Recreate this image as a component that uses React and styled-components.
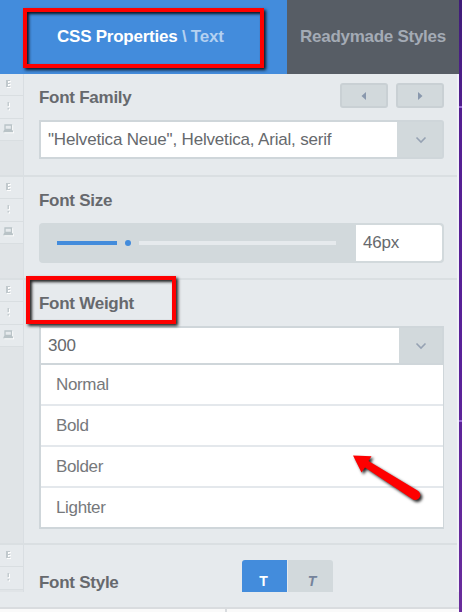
import { useState } from "react";
import styled, { createGlobalStyle } from "styled-components";

const GlobalStyle = createGlobalStyle`
  * {
    box-sizing: border-box;
  }
  body {
    margin: 0;
    overflow: hidden;
    font-family: "Liberation Sans", Arial, sans-serif;
  }
`;

const Page = styled.div`
  position: relative;
  width: 462px;
  height: 612px;
  display: flex;
  overflow: hidden;
  background: linear-gradient(#3f1c78, #551f92 20%, #5a2199 60%, #6a2c9c);
`;

const Panel = styled.div`
  width: 459px;
  display: flex;
  flex-direction: column;
  background-color: #e6eaed;
`;

const Backdrop = styled.div`
  width: 3px;
  display: flex;
  flex-direction: column;
  padding-top: 106px;
  gap: 312px;
`;

const Speck = styled.div`
  height: 2px;
  background-color: #9a6ad6;
`;

const Tabs = styled.div`
  display: flex;
  height: 74px;
  flex-shrink: 0;
`;

const Tab = styled.div`
  width: ${(props) => (props.$active ? "287px" : "172px")};
  padding: 27px 0 0 ${(props) => (props.$active ? "57px" : "13px")};
  background-color: ${(props) => (props.$active ? "#438cdc" : "#575d65")};
  color: ${(props) => (props.$active ? "#fff" : "#a4abb5")};
  font-size: 17px;
  line-height: 20px;
  font-weight: bold;
  white-space: nowrap;
  letter-spacing: ${(props) => (props.$active ? "-0.24px" : "-0.27px")};
  span {
    color: #b4d1f1;
  }
`;

const Body = styled.div`
  height: 518px;
  flex-shrink: 0;
  overflow: hidden;
  border-right: 2px solid #f0f1f7;
`;

const Section = styled.section`
  display: flex;
  height: ${(props) => props.$height}px;
  border-bottom: 2px solid #dadfe2;
`;

const Rail = styled.div`
  width: 24px;
  flex-shrink: 0;
  background-color: #e0e4e7;
  border-right: 1px solid #d9dee2;
`;

const RailCell = styled.div`
  height: ${(props) => props.$height}px;
  display: flex;
  justify-content: center;
  padding: 5px 6px 0 0;
  background-color: #e6eaed;
  border-bottom: 1px solid #d9dee1;
  svg {
    filter: drop-shadow(1px 1px 0 #fff);
  }
`;

const Content = styled.div`
  flex: 1;
  padding: 14px 13px 0 15px;
`;

const TitleRow = styled.div`
  display: flex;
  justify-content: space-between;
  height: 32px;
`;

const Title = styled.div`
  color: #66696d;
  font-size: 17px;
  line-height: 20px;
  font-weight: bold;
  letter-spacing: -0.26px;
`;

const Pager = styled.div`
  display: flex;
  gap: 8px;
  margin-top: -5px;
`;

const PagerButton = styled.button`
  width: 48px;
  height: 25px;
  padding: 0;
  display: flex;
  align-items: center;
  justify-content: center;
  background-color: #d2d9dc;
  border: 2px solid #c9d0d4;
  border-radius: 3px;
`;

const SelectBox = styled.div`
  display: flex;
  width: 405px;
  height: 39px;
  border: 2px solid #cfd6da;
  border-radius: ${(props) => (props.$open ? "0" : "0 3px 3px 0")};
  background-color: #fff;
`;

const Value = styled.div`
  flex: 1;
  padding-left: 7px;
  color: #66696d;
  font-size: 17px;
  line-height: 36px;
  letter-spacing: -0.18px;
  white-space: nowrap;
`;

const Toggle = styled.button`
  width: ${(props) => props.$width}px;
  border: 0;
  padding: 0 15px 0 0;
  display: flex;
  align-items: center;
  justify-content: flex-end;
  background-color: #d2d9dc;
`;

const Options = styled.div`
  width: 405px;
  border: solid #cfd6da;
  border-width: 0 1px 2px 2px;
  background-color: #fff;
`;

const Option = styled.div`
  height: 41px;
  padding-left: 15px;
  border-bottom: 2px solid #e4e8ec;
  color: #76787b;
  font-size: 17px;
  line-height: 39px;
  letter-spacing: -0.35px;
  &:last-child {
    height: 39px;
    border-bottom: 0;
  }
`;

const SliderBox = styled.div`
  display: flex;
  align-items: center;
  width: 405px;
  height: 40px;
  padding: 2px 2px 2px 18px;
  background-color: #d2d9dc;
  border-radius: 4px;
`;

const Bar = styled.div`
  width: ${(props) => (props.$filled ? 60 : 197)}px;
  height: 4px;
  background-color: ${(props) => (props.$filled ? "#438cdc" : "#e6eaed")};
`;

const Knob = styled.div`
  width: 6px;
  height: 6px;
  margin: 0 8px;
  border-radius: 50%;
  background-color: #438cdc;
`;

const SizeValue = styled(Value)`
  height: 36px;
  margin-left: 20px;
  background-color: #fff;
  border-radius: 0 3px 3px 0;
`;

const StyleRow = styled.div`
  display: flex;
  justify-content: space-between;
  padding-top: 1px;
`;

const StyleTitle = styled(Title)`
  padding-top: 13px;
`;

const StyleButtons = styled.div`
  display: flex;
  gap: 1px;
  margin-right: 111px;
`;

const StyleButton = styled.button`
  width: 45px;
  height: 36px;
  border: 0;
  padding: ${(props) => (props.$right ? "13px 0 0 3px" : "13px 2px 0 0")};
  display: flex;
  justify-content: center;
  font-family: inherit;
  font-size: 14px;
  line-height: 17px;
  font-weight: bold;
  font-style: ${(props) => (props.$right ? "italic" : "normal")};
  color: ${(props) => (props.$active ? "#fff" : "#75839b")};
  background-color: ${(props) => (props.$active ? "#438cdc" : "#d2d9dc")};
  border-radius: ${(props) => (props.$right ? "0 3px 0 0" : "3px 0 0 0")};
`;

const Footer = styled.div`
  display: flex;
  height: 5px;
  margin-top: 15px;
  border-top: 2px solid #d9dcdf;
  background-color: #fafafa;
`;

const FooterCell = styled.div`
  width: 227px;
  border-right: 2px solid #d9dcdf;
`;

const Highlight = styled.div`
  position: absolute;
  left: ${(props) => props.$x}px;
  top: ${(props) => props.$y}px;
  width: ${(props) => props.$w}px;
  height: ${(props) => props.$h}px;
  border: 4px solid #fe0000;
  box-shadow: 2px 2px 3px rgba(0, 0, 0, 0.85),
    inset 2px 2px 3px rgba(0, 0, 0, 0.85);
`;

const Pointer = styled.svg`
  position: absolute;
  left: 345px;
  top: 448px;
  filter: drop-shadow(2px 2px 1.5px rgba(0, 0, 0, 0.85));
`;

function LetterIcon() {
  return (
    <svg width="7" height="9" viewBox="0 0 7 9" fill="#c1c9cd">
      <path d="M1 1h2v7H1zM3 1h2v1H3zM3 4h2v1H3zM3 7h2v1H3z" />
    </svg>
  );
}

function BangIcon() {
  return (
    <svg width="7" height="10" viewBox="0 0 7 10" fill="#c3cbcf">
      <path d="M2.500 1h1.500v4H2.500zM2.500 7h1.500v1.500H2.500z" />
    </svg>
  );
}

function LaptopIcon() {
  return (
    <svg width="11" height="9" viewBox="0 0 11 9">
      <path d="M2 1h6.500v4.500H2z" fill="#e6eaed" stroke="#b9c3c7" strokeWidth="1.3" />
      <path d="M1 6h8.500l.8 2.200H.2z" fill="#b9c3c7" />
    </svg>
  );
}

function Chevron() {
  return (
    <svg width="12" height="8" viewBox="0 0 12 8" fill="none">
      <path d="M1.500 1.500L6 6l4.500-4.500" stroke="#96a2b3" strokeWidth="1.6" />
    </svg>
  );
}

function RailCells({ short }) {
  return (
    <Rail>
      <RailCell $height={22}>
        <LetterIcon />
      </RailCell>
      <RailCell $height={23}>
        <BangIcon />
      </RailCell>
      {!short && (
        <RailCell $height={22}>
          <LaptopIcon />
        </RailCell>
      )}
    </Rail>
  );
}

const weights = ["Normal", "Bold", "Bolder", "Lighter"];

export default function App() {
  const [open, setOpen] = useState(true);
  const [italic, setItalic] = useState(false);
  return (
    <>
      <GlobalStyle />
      <Page>
        <Panel>
          <Tabs>
            <Tab $active>
              CSS Properties <span>\ Text</span>
            </Tab>
            <Tab>Readymade Styles</Tab>
          </Tabs>
          <Body>
            <Section $height={103}>
              <RailCells />
              <Content>
                <TitleRow>
                  <Title>Font Family</Title>
                  <Pager>
                    <PagerButton>
                      <svg width="6" height="8" viewBox="0 0 6 8">
                        <path d="M5 0v8L.5 4z" fill="#8998ad" />
                      </svg>
                    </PagerButton>
                    <PagerButton>
                      <svg width="6" height="8" viewBox="0 0 6 8">
                        <path d="M1 0v8l4.500-4z" fill="#8998ad" />
                      </svg>
                    </PagerButton>
                  </Pager>
                </TitleRow>
                <SelectBox>
                  <Value>"Helvetica Neue", Helvetica, Arial, serif</Value>
                  <Toggle $width={45}>
                    <Chevron />
                  </Toggle>
                </SelectBox>
              </Content>
            </Section>
            <Section $height={103}>
              <RailCells />
              <Content>
                <TitleRow>
                  <Title>Font Size</Title>
                </TitleRow>
                <SliderBox>
                  <Bar $filled />
                  <Knob />
                  <Bar />
                  <SizeValue>46px</SizeValue>
                </SliderBox>
              </Content>
            </Section>
            <Section $height={265}>
              <RailCells />
              <Content>
                <TitleRow>
                  <Title>Font Weight</Title>
                </TitleRow>
                <SelectBox $open={open}>
                  <Value>300</Value>
                  <Toggle $width={43} onClick={() => setOpen((prev) => !prev)}>
                    <Chevron />
                  </Toggle>
                </SelectBox>
                {open && (
                  <Options>
                    {weights.map((weight) => (
                      <Option key={weight}>{weight}</Option>
                    ))}
                  </Options>
                )}
              </Content>
            </Section>
            <Section $height={60}>
              <RailCells short />
              <Content>
                <StyleRow>
                  <StyleTitle>Font Style</StyleTitle>
                  <StyleButtons>
                    <StyleButton $active={!italic} onClick={() => setItalic(false)}>
                      T
                    </StyleButton>
                    <StyleButton $right $active={italic} onClick={() => setItalic(true)}>
                      T
                    </StyleButton>
                  </StyleButtons>
                </StyleRow>
              </Content>
            </Section>
          </Body>
          <Footer>
            <FooterCell />
          </Footer>
        </Panel>
        <Backdrop>
          <Speck />
          <Speck />
        </Backdrop>
        <Highlight $x={23} $y={8} $w={241} $h={60} />
        <Highlight $x={26} $y={276} $w={150} $h={48} />
        <Pointer width="85" height="60" viewBox="0 0 85 60">
          <path
            d="M8 7.500L26.500 8.200L23.500 13L72.500 42.500A4.800 4.800 0 0 1 68 51.500L20 19.500L16.500 24.500Z"
            fill="#fe0000"
          />
        </Pointer>
      </Page>
    </>
  );
}
